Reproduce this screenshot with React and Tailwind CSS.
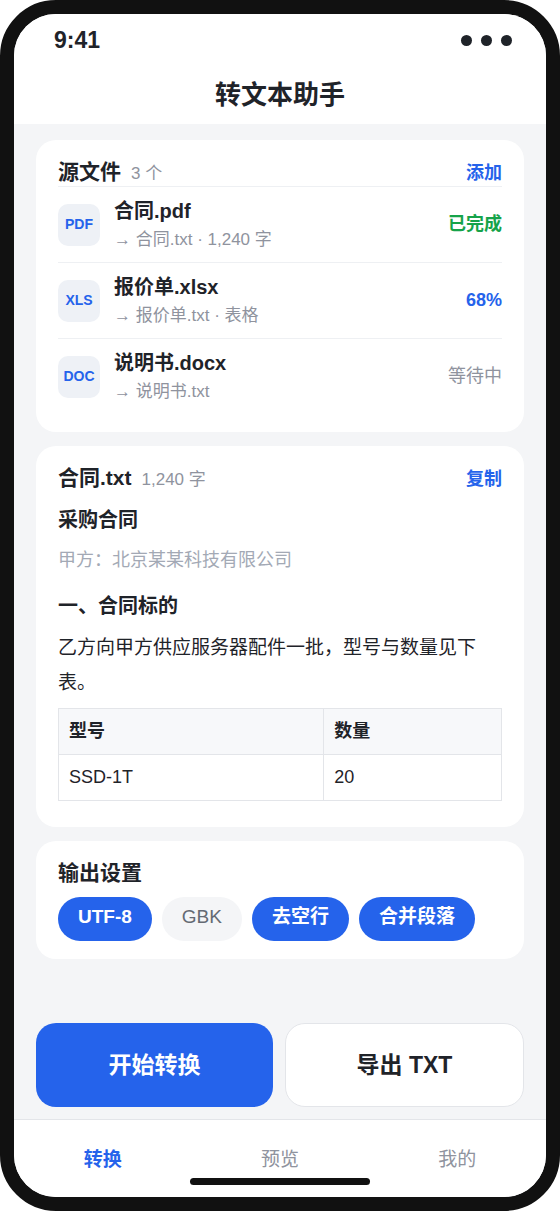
import { useState } from "react";

const files = [
  { type: "PDF", name: "合同.pdf", output: "合同.txt · 1,240 字", status: "已完成", statusClass: "font-bold text-[#16a34a]" },
  { type: "XLS", name: "报价单.xlsx", output: "报价单.txt · 表格", status: "68%", statusClass: "font-bold text-[#2563eb]" },
  { type: "DOC", name: "说明书.docx", output: "说明书.txt", status: "等待中", statusClass: "text-[#8f939e]" },
];

const options = ["UTF-8", "GBK", "去空行", "合并段落"];
const tabs = ["转换", "预览", "我的"];

const Card = ({ children }) => (
  <section className="rounded-[20px] bg-white px-[22px] py-[18px]">{children}</section>
);

const CardHeader = ({ title, note, action }) => (
  <div className="flex h-7 items-baseline leading-7">
    <h2 className="text-[21px] font-bold leading-7">{title}</h2>
    {note && <span className="ml-2.5 text-[17px] leading-7 text-[#8f939e]">{note}</span>}
    {action && (
      <button type="button" className="ml-auto text-[18px] font-bold leading-7 text-[#2563eb]">
        {action}
      </button>
    )}
  </div>
);

const FileRow = ({ file }) => (
  <li className="flex h-[76px] items-center border-t border-[#eef0f3]">
    <span className="flex size-[42px] items-center justify-center rounded-[10px] bg-[#eef1f6] text-[14px] font-bold text-[#2563eb]">
      {file.type}
    </span>
    <div className="ml-3.5 min-w-0 flex-1">
      <p className="text-[20px] font-bold leading-[30px]">{file.name}</p>
      <p className="text-[17px] leading-7 text-[#8f939e]">→ {file.output}</p>
    </div>
    <span className={`text-[18px] ${file.statusClass}`}>{file.status}</span>
  </li>
);

export default function App() {
  const [selected, setSelected] = useState(["UTF-8", "去空行", "合并段落"]);
  const [tab, setTab] = useState("转换");

  const toggleOption = (option) => {
    setSelected((prev) =>
      prev.includes(option) ? prev.filter((o) => o !== option) : [...prev, option]
    );
  };

  return (
    <div className="flex min-h-screen flex-col overflow-hidden rounded-[56px] border-[14px] border-[#111111] bg-[#f4f5f7] font-['Liberation_Sans','Noto_Sans_CJK_SC',sans-serif] text-[#1f2329]">
      {/* Status bar + title */}
      <header className="bg-white">
        <div className="flex h-[52px] items-center justify-between pl-10 pr-[34px]">
          <span className="text-[23px] font-bold">9:41</span>
          <div className="flex gap-[9px]">
            <span className="size-[11px] rounded-full bg-[#1f2329]" />
            <span className="size-[11px] rounded-full bg-[#1f2329]" />
            <span className="size-[11px] rounded-full bg-[#1f2329]" />
          </div>
        </div>
        <h1 className="text-center text-[26px] font-bold leading-[58px]">转文本助手</h1>
      </header>

      <main className="flex flex-1 flex-col gap-3.5 px-[22px] pt-4">
        <Card>
          <CardHeader title="源文件" note="3 个" action="添加" />
          <ul>
            {files.map((file) => (
              <FileRow key={file.name} file={file} />
            ))}
          </ul>
        </Card>

        <Card>
          <CardHeader title="合同.txt" note="1,240 字" action="复制" />
          <h3 className="mt-3 text-[20px] font-bold leading-8">采购合同</h3>
          <p className="mt-2 text-[18px] leading-8 text-[#a3a9b5]">甲方：北京某某科技有限公司</p>
          <h3 className="mt-3.5 text-[20px] font-bold leading-8">一、合同标的</h3>
          <p className="mt-2 text-[19px] leading-[35px]">
            乙方向甲方供应服务器配件一批，型号与数量见下表。
          </p>
          <table className="mb-2 mt-2 w-full border-collapse text-left text-[18px] leading-[25px]">
            <thead>
              <tr className="bg-[#f7f8fa]">
                <th className="border border-[#e3e5e9] px-2.5 py-2.5">型号</th>
                <th className="border border-[#e3e5e9] px-2.5 py-2.5">数量</th>
              </tr>
            </thead>
            <tbody>
              <tr>
                <td className="border border-[#e3e5e9] px-2.5 py-2.5">SSD-1T</td>
                <td className="border border-[#e3e5e9] px-2.5 py-2.5">20</td>
              </tr>
            </tbody>
          </table>
        </Card>

        <Card>
          <CardHeader title="输出设置" />
          <div className="mt-2.5 flex flex-wrap gap-2.5">
            {options.map((option) => (
              <button
                key={option}
                type="button"
                aria-pressed={selected.includes(option)}
                onClick={() => toggleOption(option)}
                className={`h-11 rounded-full px-5 pb-1 text-[19px] leading-10 ${
                  selected.includes(option) ? "bg-[#2563eb] font-bold text-white" : "bg-[#f4f5f7] text-[#646a73]"
                }`}
              >
                {option}
              </button>
            ))}
          </div>
        </Card>
      </main>

      {/* Actions */}
      <div className="flex gap-3 px-[22px] py-3 text-[23px] font-bold">
        <button type="button" className="h-[84px] flex-1 rounded-[20px] bg-[#2563eb] text-white">
          开始转换
        </button>
        <button type="button" className="h-[84px] flex-1 rounded-[20px] border border-[#e3e5e9] bg-white">
          导出 TXT
        </button>
      </div>

      <nav className="relative flex h-[78px] border-t border-[#e3e5e9] bg-white pt-1">
        {tabs.map((name) => (
          <button
            key={name}
            type="button"
            onClick={() => setTab(name)}
            className={`flex-1 text-[19px] ${tab === name ? "font-bold text-[#2563eb]" : "text-[#8f939e]"}`}
          >
            {name}
          </button>
        ))}
        <span className="absolute bottom-3 left-1/2 h-[7px] w-[180px] -translate-x-1/2 rounded-[4px] bg-[#111111]" />
      </nav>
    </div>
  );
}
